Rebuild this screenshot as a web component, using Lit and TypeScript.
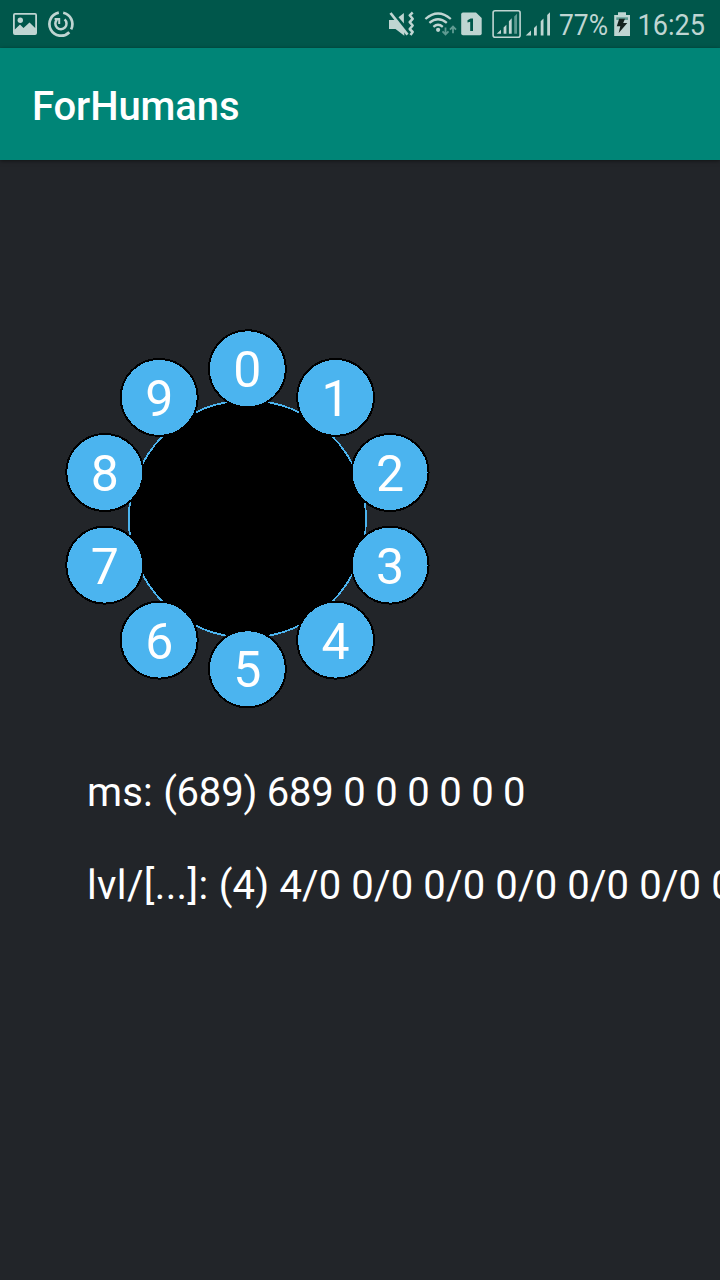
import { LitElement, html, css, svg } from "lit";
import { customElement } from "lit/decorators.js";

@customElement("status-bar")
class StatusBar extends LitElement {
  static styles = css`
    :host {
      display: flex;
      align-items: stretch;
      justify-content: space-between;
      height: 48px;
      background: #00574b;
      color: #bfd5d2;
    }
    svg { display: block; height: 48px; }
    .muted { color: #5f9b92; }
    text { font-family: Roboto, "Liberation Sans", sans-serif; fill: currentColor; }
  `;

  render() {
    return html`
      <svg width="90" viewBox="0 0 90 48" fill="currentColor">
        <path fill-rule="evenodd" d="M15 13H35Q37 13 37 15V33Q37 35 35 35H15Q13 35 13 33V15Q13 13 15 13ZM14.8 14.8V29.5L20 24.5L23.5 28L29.5 22.5L35.2 28V14.8Z"/>
        <circle cx="20.3" cy="20.3" r="2.7"/>
        <g fill="none" stroke="currentColor" stroke-width="2.7">
          <path d="M58.8 12.7A11.6 11.6 0 1 0 69.3 32.2"/>
          <path d="M63.2 12.7A11.6 11.6 0 0 1 71.1 29.4"/>
          <path d="M57 19.6A5.6 5.6 0 1 0 64.6 19.4" stroke-width="2.5"/>
          <path d="M54.6 18.9H59.2V24" stroke-width="2"/>
        </g>
      </svg>
      <svg width="340" viewBox="380 0 340 48" fill="currentColor">
        <path d="M389 20H395.5L404.3 31V35.8L395.5 29H389Z"/>
        <path d="M398.5 17.2L403.9 13V23.6Z"/>
        <path d="M390.5 13L407.5 34.7" fill="none" stroke="currentColor" stroke-width="2.7"/>
        <path d="M412.7 12.5L409.7 15.3L412.7 18.8L409.7 22.2L412.7 25.5L409.7 29L412.7 32L410.5 35" fill="none" stroke="currentColor" stroke-width="2.5" stroke-linejoin="round"/>
        <g fill="none" stroke="currentColor" stroke-width="2.3">
          <path d="M425.4 19Q438 8 450.8 19"/>
          <path d="M429.4 22.9Q438 15.5 446.8 22.9"/>
          <path d="M433.4 26.8Q438 22.8 442.8 26.8"/>
        </g>
        <circle cx="438.1" cy="29.8" r="2.1"/>
        <g class="muted" fill="none" stroke="currentColor" stroke-width="1.8">
          <path d="M445.5 27.5V34.2M442.5 31.3L445.5 34.4L448.5 31.3"/>
          <path d="M453 33.3V26.5M450 29.6L453 26.5L456 29.6"/>
        </g>
        <path d="M463 12.5H476L481.7 18V33.5Q481.7 35.3 480 35.3H463Q461.2 35.3 461.2 33.5V14.3Q461.2 12.5 463 12.5Z"/>
        <path d="M470.6 18.6H473V31H470.2V21.7L467.5 22.6V20.2Z" fill="#00574b"/>
        <rect x="493.1" y="10.8" width="27" height="26.4" rx="2" fill="none" stroke="currentColor" stroke-width="1.6"/>
        <path d="M496.7 33.8L501 29.8V33.8ZM503.6 27.5L506.4 24.7V33.8H503.6ZM508.9 21.2L511.7 18.2V33.8H508.9Z"/>
        <path class="muted" d="M514.2 16.5L517 13.7V33.8H514.2Z" fill="currentColor"/>
        <path d="M525.7 35.5L531 30.5V35.5ZM534 28L536.8 25.2V35.5H534ZM540.7 21.3L543.5 18.5V35.5H540.7ZM547.2 15L550 12.3V35.5H547.2Z"/>
        <text x="559" y="35.2" font-size="30" textLength="49" lengthAdjust="spacingAndGlyphs">77%</text>
        <path d="M614.2 15H618V12.2H626V15H630V36H614.2Z"/>
        <path d="M616.3 17.3H628V20H616.3Z" fill="#5f9b92"/>
        <path d="M619.2 18.8H625L623.2 23H627.3L618.7 33L620.3 26.2H616.8Z" fill="#15231f"/>
        <text x="637.5" y="35.2" font-size="30" textLength="67.5" lengthAdjust="spacingAndGlyphs">16:25</text>
      </svg>
    `;
  }
}

@customElement("number-dial")
class NumberDial extends LitElement {
  static styles = css`
    :host { display: block; }
    svg { display: block; }
    .hub { fill: #000; stroke: #4bb4ef; stroke-width: 1.8; }
    .key { fill: #4bb4ef; stroke: #000; stroke-width: 2; }
    .digit {
      fill: #fff;
      font: 400 50px Roboto, "Liberation Sans", sans-serif;
      text-anchor: middle;
    }
  `;

  render() {
    const keys = Array.from({ length: 10 }, (_, n) => {
      const a = (n * Math.PI) / 5;
      return { n, x: 187.4 + 150 * Math.sin(a), y: 198.8 - 150 * Math.cos(a) };
    });
    return html`
      <svg width="375" height="398" viewBox="0 0 375 398">
        <g shape-rendering="crispEdges">
          <circle class="hub" cx="187.4" cy="199" r="118.6" />
          ${keys.map((k) => svg`<circle class="key" cx=${k.x} cy=${k.y} r="38.5" />`)}
        </g>
        ${keys.map((k) => svg`<text class="digit" x=${k.x} y=${k.y + 18.4}>${k.n}</text>`)}
      </svg>
    `;
  }
}

@customElement("app-root")
class AppRoot extends LitElement {
  static styles = css`
    :host {
      display: flex;
      flex-direction: column;
      height: 1280px;
      width: 100%;
      overflow: hidden;
      background: #222529;
      color: #fff;
      font-family: Roboto, "Liberation Sans", sans-serif;
    }
    .bar {
      display: flex;
      align-items: center;
      height: 112px;
      padding: 4px 32px 0;
      box-sizing: border-box;
      background: #008577;
      box-shadow: 0 1px 4px rgba(0, 0, 0, 0.5);
      font-size: 40px;
      font-weight: 500;
      letter-spacing: -0.1px;
    }
    .content { flex: 1; padding-top: 160px; overflow: hidden; }
    .dial { padding-left: 60px; }
    .stats {
      display: flex;
      flex-direction: column;
      gap: 46px;
      padding: 51px 0 0 87px;
      font-size: 40px;
      line-height: 47px;
      white-space: nowrap;
    }
    .ms-label { letter-spacing: 0.2px; }
    .ms-values { letter-spacing: -0.22px; }
    .lvl-label { letter-spacing: 0.36px; }
    .lvl-values { letter-spacing: 0.15px; }
  `;

  render() {
    return html`
      <status-bar></status-bar>
      <header class="bar">ForHumans</header>
      <main class="content">
        <number-dial class="dial"></number-dial>
        <div class="stats">
          <div><span class="ms-label">ms: </span><span class="ms-values">(689) 689 0 0 0 0 0 0</span></div>
          <div><span class="lvl-label">lvl/[...]: </span><span class="lvl-values">(4) 4/0 0/0 0/0 0/0 0/0 0/0 0/0</span></div>
        </div>
      </main>
    `;
  }
}
